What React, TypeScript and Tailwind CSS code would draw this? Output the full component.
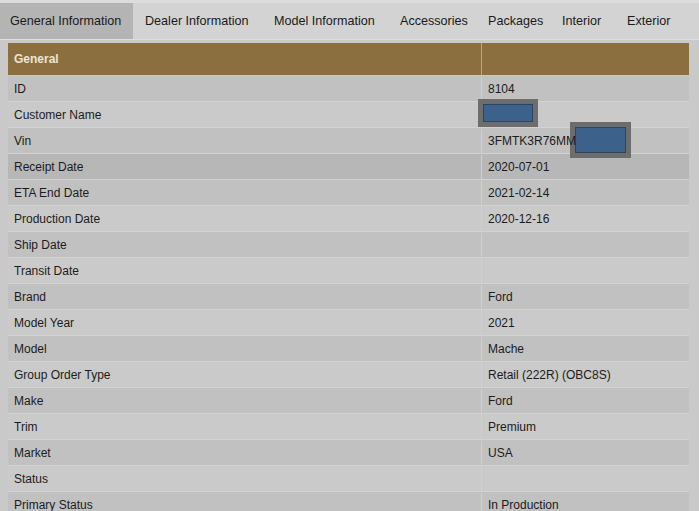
import React from "react";

type Row = { label: string; value?: string };

const tabs = [
  { name: "General Information", w: "w-[133px]" },
  { name: "Dealer Information", w: "w-[129px]" },
  { name: "Model Information", w: "w-[126px]" },
  { name: "Accessories", w: "w-[88px]" },
  { name: "Packages", w: "w-[74px]" },
  { name: "Interior", w: "w-[65px]" },
  { name: "Exterior", w: "w-[70px]" },
];

const rows: Row[] = [
  { label: "ID", value: "8104" },
  { label: "Customer Name" },
  { label: "Vin", value: "3FMTK3R76MM" },
  { label: "Receipt Date", value: "2020-07-01" },
  { label: "ETA End Date", value: "2021-02-14" },
  { label: "Production Date", value: "2020-12-16" },
  { label: "Ship Date" },
  { label: "Transit Date" },
  { label: "Brand", value: "Ford" },
  { label: "Model Year", value: "2021" },
  { label: "Model", value: "Mache" },
  { label: "Group Order Type", value: "Retail (222R) (OBC8S)" },
  { label: "Make", value: "Ford" },
  { label: "Trim", value: "Premium" },
  { label: "Market", value: "USA" },
  { label: "Status" },
  { label: "Primary Status", value: "In Production" },
];

const App: React.FC = () => {
  return (
    <div className="w-[699px] h-[511px] overflow-hidden bg-[#c9c9c9] font-['Liberation_Sans',Arial,sans-serif] text-[12px] text-[#1c1c1c]">
      <div className="h-[3px] bg-[#dcdcdc]" />
      <div className="flex h-[37px] bg-[#d3d3d3] border-b border-[#dedede] text-[12.6px] text-[#1a1a1a] whitespace-nowrap">
        {tabs.map((t, i) => (
          <div
            key={t.name}
            className={`flex items-center ${t.w} ${i === 0 ? "pl-[10px] bg-[#b4b4b4]" : "pl-[12px]"}`}
          >
            {t.name}
          </div>
        ))}
      </div>
      <div className="relative pl-[8px] pt-[3px]">
        <div className="w-[681px] bg-[#c4c4c4]">
          <div className="flex h-[33px] bg-[#8b6f3f] border-b border-[#cfc9b8] text-[#ece4d4] font-bold">
            <div className="w-[474px] pl-[6px] flex items-center border-r border-[#b8a988]">General</div>
            <div className="flex-1" />
          </div>
          {rows.map((r, i) => {
            const bg =
              r.label === "Receipt Date"
                ? "bg-[#b7b7b7]"
                : i % 2 === 0
                ? "bg-[#c1c1c1]"
                : "bg-[#cacaca]";
            return (
              <div key={r.label} className={`flex h-[26px] pt-[1px] border-b border-[#d2d2d2] ${bg}`}>
                <div className="w-[474px] pl-[6px] flex items-center border-r border-[#d0d0d0]">{r.label}</div>
                <div className="flex-1 pl-[6px] flex items-center">
                  <span className="relative z-10">{r.value}</span>
                </div>
              </div>
            );
          })}
        </div>
        <div className="absolute left-[478px] top-[59px] w-[60px] h-[28px] bg-[#6d6d6d] p-[5px]">
          <div className="w-full h-full bg-[#3c628c] border border-[#2b4563]" />
        </div>
        <div className="absolute left-[570px] top-[82px] w-[61px] h-[36px] bg-[#6d6d6d] p-[5px]">
          <div className="w-full h-full bg-[#3c628c] border border-[#2b4563]" />
        </div>
      </div>
    </div>
  );
};

export default App;
